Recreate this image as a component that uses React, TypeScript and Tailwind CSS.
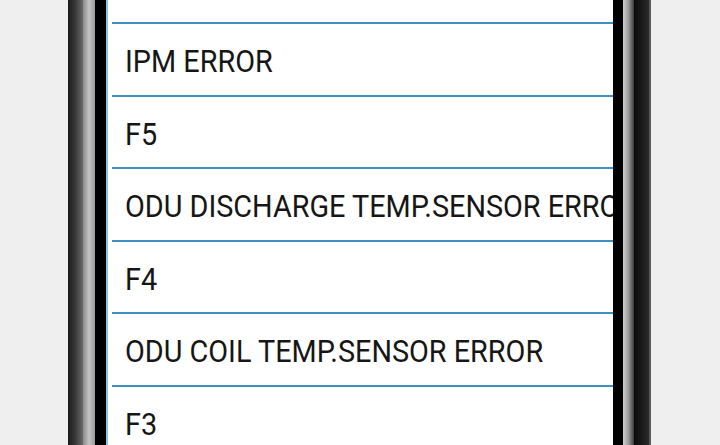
import React from "react";

const rows = [
  "F6",
  "IPM ERROR",
  "F5",
  "ODU DISCHARGE TEMP.SENSOR ERROR",
  "F4",
  "ODU COIL TEMP.SENSOR ERROR",
  "F3",
];

export default function App() {
  return (
    <div className="flex h-[445px] w-[720px] overflow-hidden bg-[#efeff0]" style={{ fontFamily: "Roboto, 'Liberation Sans', sans-serif" }}>
      <div className="w-[68px] shrink-0" />
      {/* left frame */}
      <div className="flex w-[40px] shrink-0">
        <div className="w-[15px] bg-gradient-to-r from-[#1a1a1a] via-[#3a3a3a] to-[#6a6a6a]" />
        <div className="w-[12px] bg-gradient-to-r from-[#8a8a8a] via-[#c4c4c4] to-[#9a9a9a]" />
        <div className="w-[11px] bg-black" />
        <div className="w-[2px] bg-[#8fc0dc]" />
      </div>
      {/* screen */}
      <div className="w-[505px] shrink-0 overflow-hidden bg-white pl-[4px]">
        <div className="mt-[-48.5px] flex flex-col">
          {rows.map((r) => (
            <div
              key={r}
              className="flex h-[72.5px] shrink-0 items-center border-b-2 border-[#3d8fc4] pl-[13px] pt-[4px]"
            >
              <span className="inline-block origin-left scale-x-[0.9] whitespace-nowrap text-[32px] leading-none text-[#161616]">
                {r}
              </span>
            </div>
          ))}
        </div>
      </div>
      {/* right frame */}
      <div className="flex w-[38px] shrink-0">
        <div className="w-[10px] bg-black" />
        <div className="w-[11px] bg-gradient-to-r from-[#d0d0d0] via-[#9a9a9a] to-[#3a3a3a]" />
        <div className="w-[15px] bg-gradient-to-r from-[#0a0a0a] via-[#1a1a1a] to-[#2a2a2a]" />
        <div className="w-[2px] bg-[#5a5a5a]" />
      </div>
      <div className="flex-1" />
    </div>
  );
}
